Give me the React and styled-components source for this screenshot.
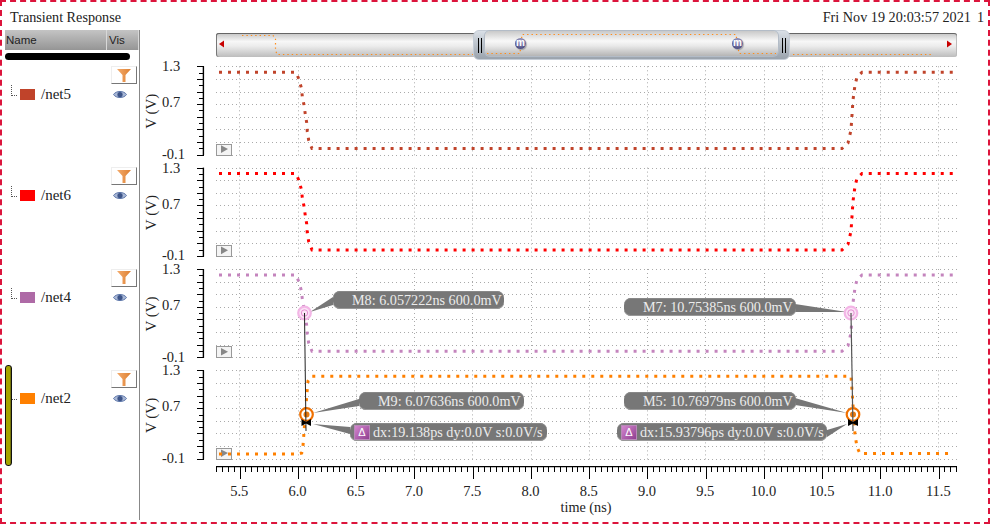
import styled, { createGlobalStyle } from "styled-components";

const Global = createGlobalStyle`
html, body { margin: 0; padding: 0; background: #fff; }
`

const SERIF = "'Liberation Serif', 'Times New Roman', serif";

const panels = [66.3, 167.6, 269, 370.4];
const hours = [5.5, 6, 6.5, 7, 7.5, 8, 8.5, 9, 9.5, 10, 10.5, 11, 11.5];
const gridX = hours.map((_, i) => 239.3 + 58.25 * i);

const legend = [
  { name: "/net5", color: "#c0432a" },
  { name: "/net6", color: "#ff0000" },
  { name: "/net4", color: "#ae6aa6" },
  { name: "/net2", color: "#ff8000" },
];

// falling edge then rising edge, y is relative to the first panel
const pulse = (dy) => {
  const pts = [
    [219, 72.3], [296, 72.3], [298.7, 78.7], [301.3, 87.7], [302.3, 96.3], [304, 105], [305.3, 114.3],
    [306.7, 122.7], [307.3, 131.7], [308.7, 140.3], [312, 148.6], [842, 148.6], [848, 143], [851, 130],
    [852, 115], [853, 100], [855, 85], [857, 77], [862, 72.3], [953, 72.3],
  ];
  return "M" + pts.map(([x, y]) => `${x} ${y + dy}`).join(" L");
};

const net2 = "M219 454 L298 454 L301.7 453 L303 446 L304 432 L305 420 L306 405 L307.3 389 L308 381 L311 376.3 L851 376.3 L852 390 L853 405 L854 420 L855 435 L857 447 L860 453.6 L953 453.6";

const callouts = [
  { text: "M8: 6.057222ns 600.0mV", x: 333, y: 291, w: 171, pad: 19 },
  { text: "M7: 10.75385ns 600.0mV", x: 624, y: 298, w: 172, pad: 19 },
  { text: "M9: 6.07636ns 600.0mV", x: 359, y: 392, w: 165, pad: 19 },
  { text: "M5: 10.76979ns 600.0mV", x: 624, y: 392, w: 172, pad: 19 },
  { text: "dx:19.138ps dy:0.0V s:0.0V/s", x: 350, y: 423, w: 197, pad: 4, delta: true },
  { text: "dx:15.93796ps dy:0.0V s:0.0V/s", x: 617, y: 423, w: 210, pad: 4, delta: true },
];

const tails = [
  "333,297 333,305 310,312",
  "795,304 795,312 847,312",
  "359,399 359,406 313,413",
  "795,398 795,405 847,413",
  "350,427 350,434 313,424",
  "827,430 827,437 847,424",
];

const px = (v) => Math.round(v) + 0.5;

function FilterIcon() {
  return (
    <svg width="16" height="15" viewBox="0 0 16 15">
      <defs>
        <linearGradient id="funnel" x1="0" y1="0" x2="1" y2="0">
          <stop offset="0" stopColor="#f4ab6c" />
          <stop offset="1" stopColor="#dd8032" />
        </linearGradient>
      </defs>
      <path d="M1 1 H15 L9.5 7 V14 L6.5 14 V7 Z" fill="url(#funnel)" />
    </svg>
  );
}

function EyeIcon() {
  return (
    <svg width="14" height="9" viewBox="0 0 14 9">
      <path d="M0.5 4.5 C3 0.5 11 0.5 13.5 4.5 C11 8.5 3 8.5 0.5 4.5 Z" fill="#a9b8d6" stroke="#5a74a8" strokeWidth="1" />
      <circle cx="7" cy="4.5" r="2.6" fill="#3d5488" />
    </svg>
  );
}

function YAxis({ top }) {
  const ticks = Array.from({ length: 15 }, (_, i) => i);
  return (
    <g>
      <line x1="203.4" x2="203.4" y1={top} y2={top + 89} stroke="#000" strokeWidth="1.4" />
      {ticks.map((i) => (
        <line key={i} x1={i % 2 ? 199 : 197} x2="204" y1={px(top + i * 6.3)} y2={px(top + i * 6.3)} stroke="#000" strokeWidth="1" />
      ))}
      <text x="162" y={top + 5} fontSize="14.5" fill="#222">1.3</text>
      <text x="162" y={top + 41} fontSize="14.5" fill="#222">0.7</text>
      <text x="162" y={top + 92.5} fontSize="14.5" fill="#222">-0.1</text>
      <text transform={`translate(155.5 ${top + 45}) rotate(-90)`} textAnchor="middle" fontSize="15" fill="#222">V (V)</text>
    </g>
  );
}

function Grid({ top }) {
  const rows = Array.from({ length: 8 }, (_, i) => i);
  return (
    <g stroke="#aaa" strokeWidth="1" strokeDasharray="1 3">
      {rows.map((i) => (
        <line key={i} x1="216" x2="957" y1={px(top + i * 12.6)} y2={px(top + i * 12.6)} />
      ))}
      {gridX.map((x) => (
        <line key={x} x1={px(x)} x2={px(x)} y1={top} y2={top + 89} />
      ))}
    </g>
  );
}

function PlayBox({ top }) {
  return (
    <g>
      <rect x="216.5" y={Math.round(top + 77.2) + 0.5} width="15" height="11" fill="#f4f4f4" stroke="#999" strokeWidth="1" />
      <path d={`M221 ${top + 79} L228 ${top + 82.7} L221 ${top + 86.6} Z`} fill="#888" />
    </g>
  );
}

function Marker({ x, y, color, soft }) {
  return (
    <g fill="none">
      <circle cx={x} cy={y} r="6.3" stroke={color} strokeWidth="2.2" fill={soft ? "#fbe3f6" : "#fff"} />
      {soft
        ? <circle cx={x} cy={y} r="3.2" stroke="#e58fd2" strokeWidth="1" />
        : <circle cx={x} cy={y} r="3" fill="#e87a10" stroke="none" />}
    </g>
  );
}

function Chart() {
  const minor = Array.from({ length: 128 }, (_, i) => 216.3 + i * 5.825).filter((x) => x < 958);
  return (
    <ChartSvg width="848" height="463" viewBox="140 57 848 463">
      {panels.map((top) => (
        <g key={top}>
          <Grid top={top} />
          <PlayBox top={top} />
          <YAxis top={top} />
        </g>
      ))}

      <g fill="none" strokeWidth="3" strokeDasharray="3 6">
        <path d={pulse(0)} stroke="#c0432a" />
        <path d={pulse(101.3)} stroke="#ff0000" />
        <path d={pulse(202.7)} stroke="#c484bd" />
        <path d={net2} stroke="#ff8000" />
      </g>

      <line x1="216" x2="957" y1="466.6" y2="466.6" stroke="#000" strokeWidth="1.4" />
      {minor.map((x, i) => {
        const major = (i - 4) % 10 === 0;
        return <line key={x} x1={px(x)} x2={px(x)} y1="466" y2={major ? 479 : 472} stroke="#000" strokeWidth="1" />;
      })}
      {hours.map((h, i) => (
        <text key={h} x={gridX[i]} y="496" textAnchor="middle" fontSize="14.5" fill="#222">{h.toFixed(1)}</text>
      ))}
      <text x="586" y="512" textAnchor="middle" fontSize="14.2" fill="#222">time (ns)</text>

      <g fill="#777">
        {tails.map((t) => <polygon key={t} points={t} />)}
      </g>

      <Marker x={304.5} y={313} color="#f3b6e6" soft />
      <Marker x={851} y={313} color="#f3b6e6" soft />
      <Marker x={306.5} y={414.5} color="#f07000" />
      <Marker x={853} y={414.5} color="#f07000" />
      <line x1="304.5" y1="313" x2="306" y2="431" stroke="#222" strokeWidth="1" />
      <line x1="851" y1="313" x2="853" y2="431" stroke="#555" strokeWidth="1.2" />
      <path d="M301.5 419 L306 422 L311 419 V426 L306 423.5 L301.5 426 Z" fill="#000" />
      <path d="M848 419 L853 422 L858 419 V426 L853 423.5 L848 426 Z" fill="#000" />
    </ChartSvg>
  );
}

export default function App() {
  return (
    <>
      <Global />
      <Frame>
        <TitleBar>
          <span>Transient Response</span>
          <Stamp>
            <span>Fri Nov 19 20:03:57 2021</span>
            <span>1</span>
          </Stamp>
        </TitleBar>
        <Body>
          <Sidebar>
            <Head>
              <NameCol>Name</NameCol>
              <VisCol>Vis</VisCol>
            </Head>
            <BlackBar />
            {legend.map((item, i) => (
              <LegendRow key={item.name}>
                <TreeLine $short={i === 3} />
                <Swatch $color={item.color} />
                <NetName>{item.name}</NetName>
                <Controls>
                  <FilterBox><FilterIcon /></FilterBox>
                  <EyeIcon />
                </Controls>
              </LegendRow>
            ))}
            <ScrollThumb />
          </Sidebar>

          <PlotArea>
            <Overview>
              <OverviewTrace width="741" height="24" viewBox="216 33 741 24">
                <g fill="none" stroke="#ff8c1a" strokeWidth="1.2" strokeDasharray="1.4 3">
                  <path d="M242 35.5 H273 L275.5 38 V50 L277 54.5 H473" />
                  <path d="M793 54.5 H932" />
                </g>
                <path d="M219 44 L224 40.5 V47.5 Z" fill="#c80000" />
                <path d="M952 44 L947 40.5 V47.5 Z" fill="#c80000" />
              </OverviewTrace>
              <Handle>
                <Grip />
                <HandleInner>
                  <InnerTrace width="293" height="25" viewBox="485 32 293 25">
                    <path d="M487 54.5 H520 L522 35.5 H736 L739 54.5 H776" fill="none" stroke="#ff8c1a" strokeWidth="1.2" strokeDasharray="1.4 3" />
                  </InnerTrace>
                  <MBadge $left={30}>m</MBadge>
                  <MBadge $left={247}>m</MBadge>
                </HandleInner>
                <Grip />
              </Handle>
            </Overview>
            <Chart />
            {callouts.map((c) => (
              <Callout key={c.text} $x={c.x - 140} $y={c.y - 30} $w={c.w} $pad={c.pad}>
                {c.delta && <DeltaBox>Δ</DeltaBox>}
                {c.text}
              </Callout>
            ))}
          </PlotArea>
        </Body>
      </Frame>
    </>
  )
}

const Frame = styled.div`
width: 990px;
height: 524px;
box-sizing: border-box;
border: 2px dashed #dc143c;
padding: 0 0 0 3px;
font-family: ${SERIF};
color: #222;
display: flex;
flex-direction: column;
overflow: hidden;
`

const TitleBar = styled.div`
height: 28px;
flex: none;
display: flex;
align-items: center;
justify-content: space-between;
padding: 2px 4px 0 5px;
box-sizing: border-box;
font-size: 14.2px;
`

const Stamp = styled.div`
display: flex;
gap: 6px;
`

const Body = styled.div`
flex: 1;
display: flex;
min-height: 0;
`

const Sidebar = styled.div`
position: relative;
width: 135px;
flex: none;
box-sizing: border-box;
border-right: 1px solid #888;
margin-bottom: 2px;
`

const Head = styled.div`
height: 20px;
display: flex;
background: linear-gradient(#c4c4c4, #959595);
font-family: 'Liberation Sans', Arial, sans-serif;
font-size: 11.5px;
line-height: 20px;
color: #222;
`

const NameCol = styled.div`
width: 102px;
padding-left: 1px;
box-sizing: border-box;
border-right: 1px solid #d8d8d8;
`

const VisCol = styled.div`
flex: 1;
padding-left: 2px;
border-right: 1px solid #d8d8d8;
`

const BlackBar = styled.div`
width: 125px;
height: 7px;
margin: 3px 0 6px;
border-radius: 4px;
background: #000;
`

const LegendRow = styled.div`
position: relative;
height: 101.35px;
display: flex;
align-items: flex-start;
`

const TreeLine = styled.div`
width: 5px;
height: ${(p) => (p.$short ? 1 : 10)}px;
margin: ${(p) => (p.$short ? 28 : 19)}px 3px 0 6px;
border-left: 1px dotted ${(p) => (p.$short ? "transparent" : "#555")};
border-bottom: 1px dotted #555;
`

const Swatch = styled.div`
width: 15px;
height: 11px;
margin-top: 23px;
background: ${(p) => p.$color};
`

const NetName = styled.div`
margin: 18px 0 0 6px;
font-size: 15px;
line-height: 20px;
`

const Controls = styled.div`
margin-left: auto;
margin-right: 2px;
width: 26px;
display: flex;
flex-direction: column;
align-items: flex-start;
gap: 6px;
`

const FilterBox = styled.div`
width: 26px;
height: 18px;
box-sizing: border-box;
background: #fff;
border-top: 1px solid #eee;
border-left: 1px solid #eee;
border-right: 1px solid #777;
border-bottom: 1px solid #777;
display: flex;
align-items: center;
justify-content: center;
& + svg {
    margin-left: 2px;
}
`

const ScrollThumb = styled.div`
position: absolute;
left: 0;
top: 335px;
width: 5px;
height: 99px;
border: 1px solid #111;
border-radius: 3px;
background: linear-gradient(90deg, #a5a500 70%, #5f5f10);
`

const PlotArea = styled.div`
position: relative;
flex: 1;
min-width: 0;
`

const Overview = styled.div`
position: relative;
width: 741px;
height: 24px;
margin: 3px 0 0 76px;
box-sizing: border-box;
border-radius: 3px;
background: linear-gradient(#c4c4c4 0%, #f7f7f7 35%, #ececec 55%, #bdbdbd 100%);
box-shadow: inset 0 1px 0 #666, inset 1px 0 0 #777, inset -1px 0 0 #bbb;
`

const OverviewTrace = styled.svg`
position: absolute;
left: 0;
top: 0;
`

const Handle = styled.div`
position: absolute;
left: 257px;
top: -3px;
width: 317px;
height: 30px;
box-sizing: border-box;
display: flex;
align-items: center;
border-radius: 6px;
border: 1px solid #c4ccd6;
background: linear-gradient(#d9dfe6, #9aa3ad);
`

const Grip = styled.div`
flex: none;
width: 4px;
height: 15px;
margin-left: 4px;
box-sizing: border-box;
border-left: 1px solid #000;
border-right: 1px solid #000;
`

const HandleInner = styled.div`
position: relative;
flex: none;
width: 293px;
height: 25px;
margin: 0 0 3px 3px;
box-sizing: border-box;
border-radius: 5px;
background: linear-gradient(#c9c9c9 0%, #f8f8f8 40%, #e8e8e8 60%, #b5b5b5 100%);
box-shadow: 0 0 0 1px #b3bcc7;
`

const InnerTrace = styled.svg`
position: absolute;
left: 0;
top: 0;
`

const MBadge = styled.div`
position: absolute;
left: ${(p) => p.$left}px;
top: 7px;
width: 11px;
height: 11px;
border-radius: 50%;
background: radial-gradient(circle at 50% 30%, #a9a9d0, #44447a 85%);
box-shadow: 1px 1px 1px rgba(0, 0, 0, 0.25);
color: #fff;
font-family: 'Liberation Sans', Arial, sans-serif;
font-size: 10px;
font-weight: 700;
line-height: 10px;
text-align: center;
`

const ChartSvg = styled.svg`
display: block;
font-family: ${SERIF};
`

const Callout = styled.div`
position: absolute;
left: ${(p) => p.$x}px;
top: ${(p) => p.$y}px;
width: ${(p) => p.$w}px;
height: 18px;
box-sizing: border-box;
padding-left: ${(p) => p.$pad}px;
display: flex;
align-items: center;
gap: 3px;
border-radius: 7px;
background: #777;
box-shadow: inset 0 -1px 0 #999, inset 0 1px 0 #888;
color: #ececec;
font-size: 14.2px;
white-space: nowrap;
`

const DeltaBox = styled.span`
width: 16px;
height: 15px;
flex: none;
background: linear-gradient(135deg, #d486cf, #8f3f90);
border: 1px solid #b889b8;
box-sizing: border-box;
color: #fff;
font-family: 'Liberation Sans', Arial, sans-serif;
font-size: 11px;
line-height: 13px;
text-align: center;
`
